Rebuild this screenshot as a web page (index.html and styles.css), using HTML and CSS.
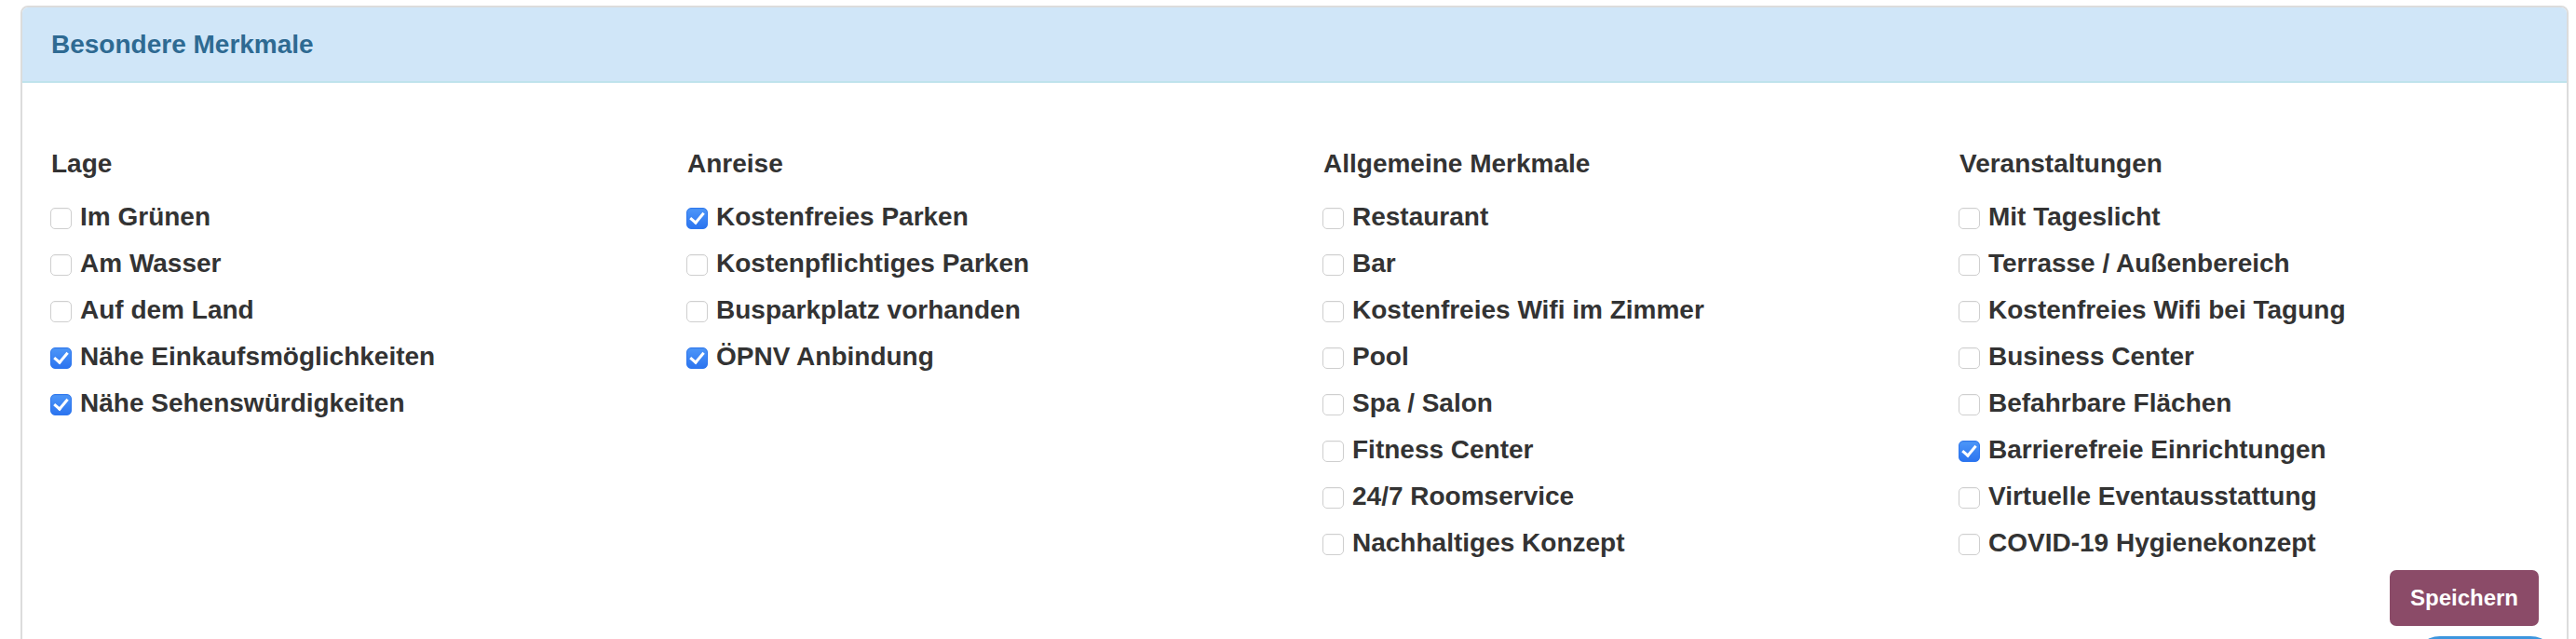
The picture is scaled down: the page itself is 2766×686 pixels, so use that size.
FILE: index.html
```html
<!DOCTYPE html>
<html lang="de">
<head>
  <meta charset="UTF-8" />
  <meta name="viewport" content="width=device-width, initial-scale=1.0"/>
  <title>Besondere Merkmale</title>
  <link rel="stylesheet" href="styles.css">
</head>
<body>
  <div class="panel">
    <div class="panel-heading">Besondere Merkmale</div>
    <form class="panel-body">
      <div class="feature-grid">
        <div class="feature-col">
          <h4>Lage</h4>
          <label class="check"><input type="checkbox" /> Im Grünen</label>
          <label class="check"><input type="checkbox" /> Am Wasser</label>
          <label class="check"><input type="checkbox" /> Auf dem Land</label>
          <label class="check"><input type="checkbox" checked /> Nähe Einkaufsmöglichkeiten</label>
          <label class="check"><input type="checkbox" checked /> Nähe Sehenswürdigkeiten</label>
        </div>
        <div class="feature-col">
          <h4>Anreise</h4>
          <label class="check"><input type="checkbox" checked /> Kostenfreies Parken</label>
          <label class="check"><input type="checkbox" /> Kostenpflichtiges Parken</label>
          <label class="check"><input type="checkbox" /> Busparkplatz vorhanden</label>
          <label class="check"><input type="checkbox" checked /> ÖPNV Anbindung</label>
        </div>
        <div class="feature-col">
          <h4>Allgemeine Merkmale</h4>
          <label class="check"><input type="checkbox" /> Restaurant</label>
          <label class="check"><input type="checkbox" /> Bar</label>
          <label class="check"><input type="checkbox" /> Kostenfreies Wifi im Zimmer</label>
          <label class="check"><input type="checkbox" /> Pool</label>
          <label class="check"><input type="checkbox" /> Spa / Salon</label>
          <label class="check"><input type="checkbox" /> Fitness Center</label>
          <label class="check"><input type="checkbox" /> 24/7 Roomservice</label>
          <label class="check"><input type="checkbox" /> Nachhaltiges Konzept</label>
        </div>
        <div class="feature-col">
          <h4>Veranstaltungen</h4>
          <label class="check"><input type="checkbox" /> Mit Tageslicht</label>
          <label class="check"><input type="checkbox" /> Terrasse / Außenbereich</label>
          <label class="check"><input type="checkbox" /> Kostenfreies Wifi bei Tagung</label>
          <label class="check"><input type="checkbox" /> Business Center</label>
          <label class="check"><input type="checkbox" /> Befahrbare Flächen</label>
          <label class="check"><input type="checkbox" checked /> Barrierefreie Einrichtungen</label>
          <label class="check"><input type="checkbox" /> Virtuelle Eventausstattung</label>
          <label class="check"><input type="checkbox" /> COVID-19 Hygienekonzept</label>
        </div>
      </div>
      <div class="actions">
        <button type="button" class="btn-save">Speichern</button>
        <button type="button" class="btn-top" aria-label="Nach oben"></button>
      </div>
    </form>
  </div>
</body>
</html>
```

FILE: styles.css
```css
body {
  margin: 6px 8px 0 22px;
  font-family: "Liberation Sans", Arial, Helvetica, sans-serif;
  color: #333;
  background: #fff;
}
.panel {
  border: 2px solid #dcdcdc;
  border-radius: 8px;
  background: #fff;
}
.panel-heading {
  height: 79px;
  padding: 0 31px;
  display: flex;
  align-items: center;
  background: #d0e6f8;
  border-bottom: 2px solid #bfe3ec;
  border-radius: 6px 6px 0 0;
  color: #2e6a92;
  font-size: 28px;
  font-weight: bold;
}
.panel-body {
  padding: 67px 30px 0 30px;
}
.feature-grid {
  display: grid;
  grid-template-columns: repeat(4, 1fr);
  column-gap: 60px;
}
.feature-col {
  display: flex;
  flex-direction: column;
  gap: 10px;
}
.feature-col h4 {
  margin: 0 0 7px 1px;
  font-size: 28px;
  line-height: 40px;
  font-weight: bold;
}
.check {
  display: flex;
  align-items: center;
  gap: 9px;
  height: 40px;
  font-size: 28px;
  font-weight: bold;
  white-space: nowrap;
}
.check input {
  appearance: none;
  -webkit-appearance: none;
  position: relative;
  flex: none;
  width: 23px;
  height: 23px;
  margin: 2px 0 0 0;
  border: 1.5px solid #cfcfcf;
  border-radius: 5px;
  background: #fff;
  box-shadow: inset 0 1px 1px rgba(0,0,0,0.04);
}
.check input:checked {
  border-color: #2f78ef;
  background: linear-gradient(#4c96f9, #2c74ef);
}
.check input:checked::after {
  content: "";
  position: absolute;
  left: 6px;
  top: 1px;
  width: 6px;
  height: 12px;
  border: solid #fff;
  border-width: 0 3.5px 3.5px 0;
  transform: rotate(40deg);
}
.actions {
  display: flex;
  flex-direction: column;
  align-items: flex-end;
  gap: 11px;
  margin-top: 9px;
}
.btn-save {
  width: 160px;
  height: 60px;
  padding: 0;
  font-family: inherit;
  font-size: 24px;
  font-weight: bold;
  color: #fff;
  background: #8b4b68;
  border: none;
  border-radius: 7px;
}
.btn-top {
  width: 157px;
  height: 60px;
  margin-right: -21px;
  padding: 0;
  background: #3d96de;
  border: none;
  border-radius: 30px;
}
```
